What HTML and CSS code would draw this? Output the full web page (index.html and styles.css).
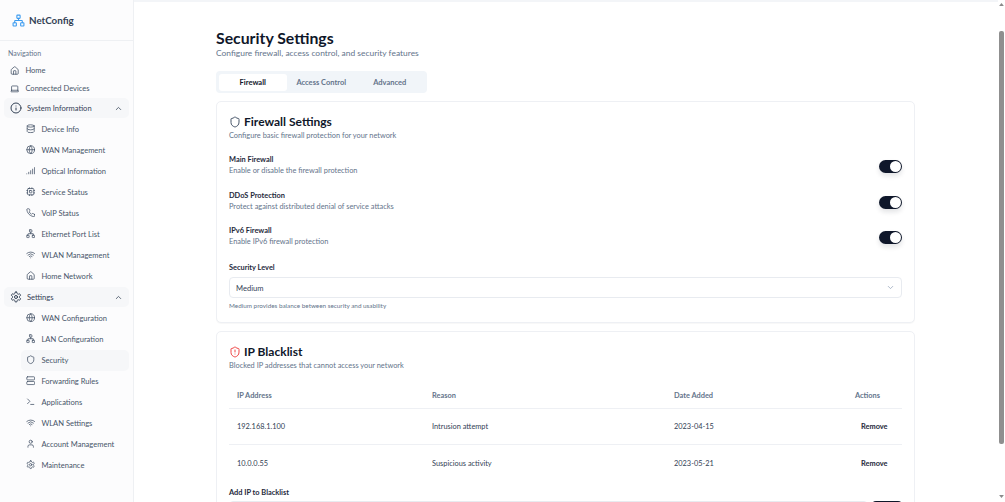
FILE: index.html
```html
<!DOCTYPE html>
<html lang="en">
<head>
<meta charset="utf-8">
<title>NetConfig</title>
<link rel="stylesheet" href="styles.css">
</head>
<body>
<svg class="sprite" aria-hidden="true">
<symbol id="network" viewBox="0 0 24 24"><rect x="16" y="16" width="6" height="6" rx="1"/><rect x="2" y="16" width="6" height="6" rx="1"/><rect x="9" y="2" width="6" height="6" rx="1"/><path d="M5 16v-3a1 1 0 0 1 1-1h12a1 1 0 0 1 1 1v3"/><path d="M12 12V8"/></symbol>
<symbol id="home" viewBox="0 0 24 24"><path d="M15 21v-8a1 1 0 0 0-1-1h-4a1 1 0 0 0-1 1v8"/><path d="M3 10a2 2 0 0 1 .709-1.528l7-5.999a2 2 0 0 1 2.582 0l7 5.999A2 2 0 0 1 21 10v9a2 2 0 0 1-2 2H5a2 2 0 0 1-2-2z"/></symbol>
<symbol id="laptop" viewBox="0 0 24 24"><path d="M20 16V7a2 2 0 0 0-2-2H6a2 2 0 0 0-2 2v9m16 0H4m16 0 1.28 2.55a1 1 0 0 1-.9 1.45H3.62a1 1 0 0 1-.9-1.45L4 16"/></symbol>
<symbol id="info" viewBox="0 0 24 24"><circle cx="12" cy="12" r="10"/><path d="M12 16v-4"/><path d="M12 8h.01"/></symbol>
<symbol id="database" viewBox="0 0 24 24"><ellipse cx="12" cy="5" rx="9" ry="3"/><path d="M3 5V19A9 3 0 0 0 21 19V5"/><path d="M3 12A9 3 0 0 0 21 12"/></symbol>
<symbol id="globe" viewBox="0 0 24 24"><circle cx="12" cy="12" r="10"/><path d="M12 2a14.5 14.5 0 0 0 0 20 14.5 14.5 0 0 0 0-20"/><path d="M2 12h20"/></symbol>
<symbol id="signal" viewBox="0 0 24 24"><path d="M2 20h.01"/><path d="M7 20v-4"/><path d="M12 20v-8"/><path d="M17 20V8"/><path d="M22 4v16"/></symbol>
<symbol id="cpu" viewBox="0 0 24 24"><rect x="4" y="4" width="16" height="16" rx="2"/><rect x="9" y="9" width="6" height="6" rx="1"/><path d="M15 2v2M15 20v2M2 15h2M2 9h2M20 15h2M20 9h2M9 2v2M9 20v2"/></symbol>
<symbol id="phone" viewBox="0 0 24 24"><path d="M22 16.92v3a2 2 0 0 1-2.18 2 19.79 19.79 0 0 1-8.63-3.07 19.5 19.5 0 0 1-6-6 19.79 19.79 0 0 1-3.07-8.67A2 2 0 0 1 4.11 2h3a2 2 0 0 1 2 1.72 12.84 12.84 0 0 0 .7 2.81 2 2 0 0 1-.45 2.11L8.09 9.91a16 16 0 0 0 6 6l1.27-1.27a2 2 0 0 1 2.11-.45 12.84 12.84 0 0 0 2.81.7A2 2 0 0 1 22 16.92z"/></symbol>
<symbol id="wifi" viewBox="0 0 24 24"><path d="M12 20h.01"/><path d="M2 8.82a15 15 0 0 1 20 0"/><path d="M5 12.859a10 10 0 0 1 14 0"/><path d="M8.5 16.429a5 5 0 0 1 7 0"/></symbol>
<symbol id="settings" viewBox="0 0 24 24"><path d="M12.22 2h-.44a2 2 0 0 0-2 2v.18a2 2 0 0 1-1 1.73l-.43.25a2 2 0 0 1-2 0l-.15-.08a2 2 0 0 0-2.73.73l-.22.38a2 2 0 0 0 .73 2.73l.15.1a2 2 0 0 1 1 1.72v.51a2 2 0 0 1-1 1.74l-.15.09a2 2 0 0 0-.73 2.73l.22.38a2 2 0 0 0 2.73.73l.15-.08a2 2 0 0 1 2 0l.43.25a2 2 0 0 1 1 1.73V20a2 2 0 0 0 2 2h.44a2 2 0 0 0 2-2v-.18a2 2 0 0 1 1-1.73l.43-.25a2 2 0 0 1 2 0l.15.08a2 2 0 0 0 2.73-.73l.22-.39a2 2 0 0 0-.73-2.73l-.15-.08a2 2 0 0 1-1-1.74v-.5a2 2 0 0 1 1-1.74l.15-.09a2 2 0 0 0 .73-2.73l-.22-.38a2 2 0 0 0-2.73-.73l-.15.08a2 2 0 0 1-2 0l-.43-.25a2 2 0 0 1-1-1.73V4a2 2 0 0 0-2-2z"/><circle cx="12" cy="12" r="3"/></symbol>
<symbol id="shield" viewBox="0 0 24 24"><path d="M20 13c0 5-3.5 7.5-7.66 8.95a1 1 0 0 1-.67-.01C7.5 20.5 4 18 4 13V6a1 1 0 0 1 1-1c2 0 4.5-1.2 6.24-2.72a1.17 1.17 0 0 1 1.52 0C14.51 3.81 17 5 19 5a1 1 0 0 1 1 1z"/></symbol>
<symbol id="shield-alert" viewBox="0 0 24 24"><path d="M20 13c0 5-3.5 7.5-7.66 8.95a1 1 0 0 1-.67-.01C7.5 20.5 4 18 4 13V6a1 1 0 0 1 1-1c2 0 4.5-1.2 6.24-2.72a1.17 1.17 0 0 1 1.52 0C14.51 3.81 17 5 19 5a1 1 0 0 1 1 1z"/><path d="M12 8v4"/><path d="M12 16h.01"/></symbol>
<symbol id="server" viewBox="0 0 24 24"><rect x="2" y="2" width="20" height="8" rx="2"/><rect x="2" y="14" width="20" height="8" rx="2"/></symbol>
<symbol id="terminal" viewBox="0 0 24 24"><polyline points="4 17 10 11 4 5"/><line x1="12" y1="19" x2="20" y2="19"/></symbol>
<symbol id="user" viewBox="0 0 24 24"><path d="M19 21v-2a4 4 0 0 0-4-4H9a4 4 0 0 0-4 4v2"/><circle cx="12" cy="7" r="4"/></symbol>
<symbol id="chev-up" viewBox="0 0 24 24"><path d="m18 15-6-6-6 6"/></symbol>
<symbol id="chev-down" viewBox="0 0 24 24"><path d="m6 9 6 6 6-6"/></symbol>
</svg>
<div class="app">
  <aside class="sidebar">
    <div class="brand"><svg class="brand-icon"><use href="#network"/></svg><span>NetConfig</span></div>
    <nav class="nav">
      <div class="nav-label">Navigation</div>
      <a class="top"><svg class="ic"><use href="#home"/></svg>Home</a>
      <a class="top"><svg class="ic"><use href="#laptop"/></svg>Connected Devices</a>
      <a class="group"><svg class="ic-lg"><use href="#info"/></svg>System Information<svg class="chev"><use href="#chev-up"/></svg></a>
      <a class="sub"><svg class="ic"><use href="#database"/></svg>Device Info</a>
      <a class="sub"><svg class="ic"><use href="#globe"/></svg>WAN Management</a>
      <a class="sub"><svg class="ic"><use href="#signal"/></svg>Optical Information</a>
      <a class="sub"><svg class="ic"><use href="#cpu"/></svg>Service Status</a>
      <a class="sub"><svg class="ic"><use href="#phone"/></svg>VoIP Status</a>
      <a class="sub"><svg class="ic"><use href="#network"/></svg>Ethernet Port List</a>
      <a class="sub"><svg class="ic"><use href="#wifi"/></svg>WLAN Management</a>
      <a class="sub"><svg class="ic"><use href="#home"/></svg>Home Network</a>
      <a class="group"><svg class="ic-lg"><use href="#settings"/></svg>Settings<svg class="chev"><use href="#chev-up"/></svg></a>
      <a class="sub"><svg class="ic"><use href="#globe"/></svg>WAN Configuration</a>
      <a class="sub"><svg class="ic"><use href="#network"/></svg>LAN Configuration</a>
      <a class="sub current"><svg class="ic"><use href="#shield"/></svg>Security</a>
      <a class="sub"><svg class="ic"><use href="#server"/></svg>Forwarding Rules</a>
      <a class="sub"><svg class="ic"><use href="#terminal"/></svg>Applications</a>
      <a class="sub"><svg class="ic"><use href="#wifi"/></svg>WLAN Settings</a>
      <a class="sub"><svg class="ic"><use href="#user"/></svg>Account Management</a>
      <a class="sub"><svg class="ic"><use href="#settings"/></svg>Maintenance</a>
    </nav>
  </aside>
  <main class="main">
    <div class="topline"></div>
    <div class="content">
      <h1>Security Settings</h1>
      <p class="lead">Configure firewall, access control, and security features</p>
      <div class="tabs">
        <span class="tab active">Firewall</span>
        <span class="tab">Access Control</span>
        <span class="tab">Advanced</span>
      </div>
      <section class="card first-card">
        <h2><svg class="h-ic"><use href="#shield"/></svg>Firewall Settings</h2>
        <p class="desc">Configure basic firewall protection for your network</p>
        <div class="setting">
          <div><div class="s-title">Main Firewall</div><div class="s-desc">Enable or disable the firewall protection</div></div>
          <span class="switch"></span>
        </div>
        <div class="setting">
          <div><div class="s-title">DDoS Protection</div><div class="s-desc">Protect against distributed denial of service attacks</div></div>
          <span class="switch"></span>
        </div>
        <div class="setting">
          <div><div class="s-title">IPv6 Firewall</div><div class="s-desc">Enable IPv6 firewall protection</div></div>
          <span class="switch"></span>
        </div>
        <div class="s-title level">Security Level</div>
        <div class="select"><span>Medium</span><svg class="sel-chev"><use href="#chev-down"/></svg></div>
        <p class="hint">Medium provides balance between security and usability</p>
      </section>
      <section class="card">
        <h2><svg class="h-ic red"><use href="#shield-alert"/></svg>IP Blacklist</h2>
        <p class="desc">Blocked IP addresses that cannot access your network</p>
        <table>
          <thead><tr><th class="c1">IP Address</th><th class="c2">Reason</th><th class="c3">Date Added</th><th class="c4">Actions</th></tr></thead>
          <tbody>
            <tr><td>192.168.1.100</td><td>Intrusion attempt</td><td>2023-04-15</td><td class="rm">Remove</td></tr>
            <tr><td>10.0.0.55</td><td>Suspicious activity</td><td>2023-05-21</td><td class="rm">Remove</td></tr>
          </tbody>
        </table>
        <div class="s-title add">Add IP to Blacklist</div>
        <div class="add-row"><span class="input"></span><span class="btn"></span></div>
      </section>
    </div>
  </main>
  <div class="scrollbar">
    <svg class="arrow" viewBox="0 0 8 5"><path d="M4 0 8 5H0z"/></svg>
    <span class="thumb"></span>
    <svg class="arrow" viewBox="0 0 8 5"><path d="M0 0H8L4 5z"/></svg>
  </div>
</div>
</body>
</html>
```
FILE: styles.css
```css
* { box-sizing: border-box; }
html, body { margin: 0; height: 100%; overflow: hidden; }
body { font-family: Lato, "Liberation Sans", sans-serif; background: #fff; color: #0f172a; }
.sprite { display: none; }
svg { fill: none; stroke: currentColor; stroke-width: 2; stroke-linecap: round; stroke-linejoin: round; flex: none; }
.app { display: flex; height: 502px; overflow: hidden; position: relative; }

.sidebar { width: 134px; flex: none; background: #fcfcfd; border-right: 1px solid #eef0f3; color: #475569; }
.brand { height: 41px; border-bottom: 1px solid #eef0f3; display: flex; align-items: center; gap: 4px; padding-left: 12px; font-size: 9.8px; font-weight: 700; color: #334155; }
.brand-icon { width: 13px; height: 13px; color: #3b9bf0; }
.nav { padding: 6px 4px 0; font-size: 7.55px; }
.nav-label { height: 12px; line-height: 12px; padding-left: 4px; font-size: 7px; color: #64748b; margin-bottom: 2px; }
.nav a { display: flex; align-items: center; }
.top { height: 18.6px; padding-left: 6px; gap: 6px; }
.ic { width: 9.4px; height: 9.4px; }
.ic-lg { width: 12px; height: 12px; color: #334155; }
.group { height: 20px; margin: .5px 0; padding: 0 6px; gap: 5px; background: #f6f7f9; border-radius: 5px; color: #334155; }
.top + .group { margin-top: 0; }
.chev { width: 9px; height: 9px; margin-left: auto; color: #334155; }
.sub { height: 21px; margin-left: 17px; padding-left: 5px; gap: 6px; border-radius: 5px; }
.current { background: #f6f7f9; }

.main { flex: 1; min-width: 0; position: relative; }
.topline { height: 2px; background: #f3f5f8; }
.content { width: 699px; margin-left: 82px; }
h1 { margin: 0; padding-top: 28px; font-size: 15.8px; line-height: 16.5px; font-weight: 700; }
.lead { margin: 0; font-size: 8.45px; line-height: 12px; color: #64748b; }
.tabs { display: flex; width: fit-content; margin-top: 12.5px; padding: 2.5px; height: 22px; background: #f1f5f9; border-radius: 4px; font-size: 7.5px; font-weight: 700; color: #64748b; }
.tab { width: 68.5px; display: flex; align-items: center; justify-content: center; border-radius: 3px; }
.active { background: #fff; color: #0f172a; }

.card { border: 1px solid #eef0f4; border-radius: 5px; background: #fff; padding: 12px; margin-top: 8px; box-shadow: 0 1px 1px rgba(15,23,42,.03); }
.first-card { padding-bottom: 11px; }
h2 { margin: 0; display: flex; align-items: center; gap: 3px; font-size: 12px; line-height: 15px; font-weight: 700; }
.h-ic { width: 12px; height: 12px; color: #475569; }
.red { color: #ef4444; }
.desc { margin: .5px 0 0; font-size: 7.4px; line-height: 11px; color: #64748b; }
.setting { display: flex; justify-content: space-between; align-items: center; margin-top: 13.5px; height: 22px; }
.s-title { font-size: 7.4px; line-height: 11px; font-weight: 700; color: #1e293b; }
.s-desc { font-size: 7.4px; line-height: 11px; color: #64748b; }
.switch { width: 23px; height: 13px; margin-top: 3px; border-radius: 7px; background: #0f172a; position: relative; box-shadow: 0 3px 5px rgba(15,23,42,.12); }
.switch::after { content: ""; position: absolute; right: 1px; top: 1px; width: 11px; height: 11px; border-radius: 50%; background: #fff; }
.level { margin-top: 14.5px; }
.select { margin-top: 4.5px; height: 21px; border: 1px solid #e8ebf0; border-radius: 4px; display: flex; align-items: center; justify-content: space-between; padding: 0 6px; font-size: 7.6px; color: #334155; }
.sel-chev { width: 9px; height: 9px; color: #94a3b8; }
.hint { margin: 3px 0 0; font-size: 6.35px; line-height: 10px; color: #64748b; }

table { width: 100%; border-collapse: collapse; table-layout: fixed; margin-top: 12.5px; font-size: 7.4px; }
th { height: 25px; text-align: left; font-weight: 700; color: #64748b; padding: 0 8px; border-bottom: 1px solid #eef0f4; }
td { height: 36.5px; padding: 0 8px; color: #334155; border-bottom: 1px solid #eef0f4; }
tbody tr:last-child td { border-bottom: 0; }
.c1 { width: 195px; } .c2 { width: 242px; } .c3 { width: 181px; }
.rm { font-weight: 700; color: #1e293b; padding-left: 14px; white-space: nowrap; }
.add { margin-top: 5.5px; }
.add-row { display: flex; gap: 4px; margin-top: 3px; height: 21px; }
.input { flex: 1; border: 1px solid #e8ebf0; border-radius: 4px; }
.btn { width: 30px; background: #0f172a; border-radius: 4px; }

.scrollbar { position: absolute; top: 0; right: 0; bottom: 0; width: 7px; display: flex; flex-direction: column; align-items: center; padding: 3px 0 4px; background: #fff; color: #7f7f7f; }
.arrow { width: 5px; height: 3px; fill: #8a8a8a; stroke: none; }
.thumb { width: 5px; height: 413px; margin-top: 25px; margin-bottom: auto; background: #8f8f8f; border-radius: 2px; }
```
